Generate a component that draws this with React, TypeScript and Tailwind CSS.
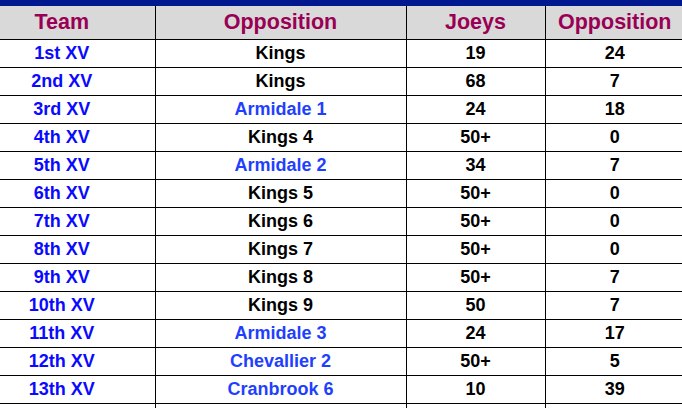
import React from 'react';

interface Result {
  team: string;
  opposition: string;
  linked: boolean;
  joeys: string;
  opp: string;
}

const results: Result[] = [
  { team: '1st XV', opposition: 'Kings', linked: false, joeys: '19', opp: '24' },
  { team: '2nd XV', opposition: 'Kings', linked: false, joeys: '68', opp: '7' },
  { team: '3rd XV', opposition: 'Armidale 1', linked: true, joeys: '24', opp: '18' },
  { team: '4th XV', opposition: 'Kings 4', linked: false, joeys: '50+', opp: '0' },
  { team: '5th XV', opposition: 'Armidale 2', linked: true, joeys: '34', opp: '7' },
  { team: '6th XV', opposition: 'Kings 5', linked: false, joeys: '50+', opp: '0' },
  { team: '7th XV', opposition: 'Kings 6', linked: false, joeys: '50+', opp: '0' },
  { team: '8th XV', opposition: 'Kings 7', linked: false, joeys: '50+', opp: '0' },
  { team: '9th XV', opposition: 'Kings 8', linked: false, joeys: '50+', opp: '7' },
  { team: '10th XV', opposition: 'Kings 9', linked: false, joeys: '50', opp: '7' },
  { team: '11th XV', opposition: 'Armidale 3', linked: true, joeys: '24', opp: '17' },
  { team: '12th XV', opposition: 'Chevallier 2', linked: true, joeys: '50+', opp: '5' },
  { team: '13th XV', opposition: 'Cranbrook 6', linked: true, joeys: '10', opp: '39' },
];

const App: React.FC = () => {
  return (
    <div className="w-[682px] h-[408px] overflow-hidden bg-white font-['Liberation_Sans',Arial,sans-serif]">
      <div className="h-[6px] bg-[#00188f]" />
      <div className="-ml-[31px]">
        <table className="border-collapse table-fixed w-[715px]">
          <colgroup>
            <col className="w-[186px]" />
            <col className="w-[251px]" />
            <col className="w-[139px]" />
            <col className="w-[139px]" />
          </colgroup>
          <thead>
            <tr className="h-[33px] bg-[#d9d9d9]">
              {['Team', 'Opposition', 'Joeys', 'Opposition'].map((h, i) => (
                <th
                  key={i}
                  className={`p-0 text-center text-[21.5px] leading-none font-bold text-[#990055] border-b border-black ${i > 0 ? 'border-l' : ''}`}
                >
                  {h}
                </th>
              ))}
            </tr>
          </thead>
          <tbody>
            {results.map((r, i) => (
              <tr key={i} className="h-[28px]">
                <td className="p-0 text-center text-[18px] leading-none font-bold text-[#0a0aff] border-b border-black">
                  {r.team}
                </td>
                <td
                  className={`p-0 text-center text-[18px] leading-none font-bold border-b border-l border-black ${
                    r.linked ? 'text-[#1f3fff]' : 'text-black'
                  }`}
                >
                  {r.opposition}
                </td>
                <td className="p-0 text-center text-[18px] leading-none font-bold text-black border-b border-l border-black">
                  {r.joeys}
                </td>
                <td className="p-0 text-center text-[18px] leading-none font-bold text-black border-b border-l border-black">
                  {r.opp}
                </td>
              </tr>
            ))}
            {/* partly visible next row */}
            <tr className="h-[28px]">
              <td className="p-0 border-black" />
              <td className="p-0 border-l border-black" />
              <td className="p-0 border-l border-black" />
              <td className="p-0 border-l border-black" />
            </tr>
          </tbody>
        </table>
      </div>
    </div>
  );
};

export default App;
